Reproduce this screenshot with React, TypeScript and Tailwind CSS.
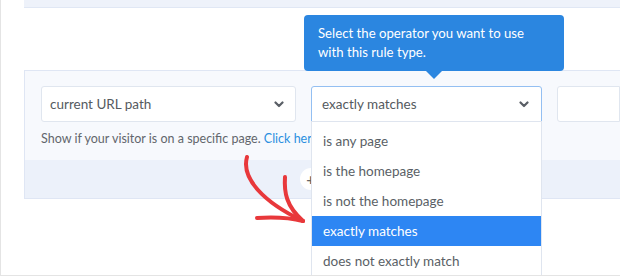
import React from "react";

function Chevron() {
  return (
    <svg width="10" height="7" viewBox="0 0 10 7" className="shrink-0">
      <path d="M1.5 1.5 L5 5 L8.5 1.5" fill="none" stroke="#5a5f66" strokeWidth="2.2" strokeLinecap="round" strokeLinejoin="round" />
    </svg>
  );
}

const items = ["is any page", "is the homepage", "is not the homepage", "exactly matches", "does not exactly match"];

export default function App() {
  return (
    <div
      className="relative w-[620px] h-[276px] overflow-hidden bg-white border-l border-b border-[#e4e4e4]"
      style={{ fontFamily: "Lato, 'Open Sans', sans-serif" }}
    >
      <div className="ml-[23px] flex flex-col">
        <div className="h-[8px] bg-[#eef2fa] border-b border-[#e0e7f4]" />
        <div className="h-[62px]" />
        <div className="bg-[#f7f9fd] border-t border-l border-[#dfe6f4]">
          <div className="flex gap-[15px] pl-[16px] pt-[15px]">
            <div className="w-[255px] h-[36px] bg-white border border-[#e0e6ef] rounded-[3px] flex items-center justify-between pl-[8px] pr-[11px] text-[13.5px] text-[#555a60]">
              <span>current URL path</span>
              <Chevron />
            </div>
            <div className="w-[231px] h-[36px] bg-white border border-[#93bff2] rounded-t-[3px] flex items-center justify-between pl-[10px] pr-[12px] text-[13.5px] text-[#555a60]">
              <span>exactly matches</span>
              <Chevron />
            </div>
            <div className="flex-1 h-[36px] bg-white border border-[#e0e6ef] rounded-l-[3px]" />
          </div>
          <div className="pl-[16px] pt-[8px] h-[38px] text-[12.5px] text-[#62666c] whitespace-nowrap">
            Show if your visitor is on a specific page. <span className="text-[#2b8fe0]">Click here</span>
          </div>
          <div className="h-[39px] bg-[#ecf1fa] border-b border-[#dfe6f4] relative">
            <div className="absolute left-[275px] top-[8px] w-[22px] h-[22px] rounded-full bg-white flex items-center justify-center text-[#666] text-[16px] font-bold leading-none">
              +
            </div>
          </div>
        </div>
      </div>

      {/* red arrow */}
      <svg className="absolute left-0 top-0" width="620" height="276" viewBox="0 0 620 276">
        <g fill="none" stroke="#e8383b" strokeWidth="4" strokeLinecap="round" strokeLinejoin="round">
          <path d="M246 157 C 240 178, 262 202, 302 221" />
          <path d="M284 177 C 283 192, 285 206, 302 221" />
          <path d="M256 218 C 272 217, 290 218, 302 221" />
        </g>
      </svg>

      {/* dropdown */}
      <div className="absolute left-[310px] top-[121px] w-[231px] h-[160px] bg-white border border-[#dfe5ef] pt-[4px] text-[13.5px] text-[#5a5f66]">
        {items.map((t) => (
          <div
            key={t}
            className={
              "h-[30px] flex items-center pl-[11px] " +
              (t === "exactly matches" ? "bg-[#2d86f3] text-white" : "")
            }
          >
            {t}
          </div>
        ))}
      </div>

      {/* tooltip */}
      <div className="absolute left-[303px] top-[15px] w-[260px] h-[56px] bg-[#2b86e0] rounded-[4px] text-white text-[13.2px] leading-[19px] pl-[14px] pt-[9px]">
        Select the operator you want to use
        <br />
        with this rule type.
        <div className="absolute left-[122px] -bottom-[8px] w-0 h-0 border-l-[8px] border-r-[8px] border-t-[8px] border-l-transparent border-r-transparent border-t-[#2b86e0]" />
      </div>
    </div>
  );
}
